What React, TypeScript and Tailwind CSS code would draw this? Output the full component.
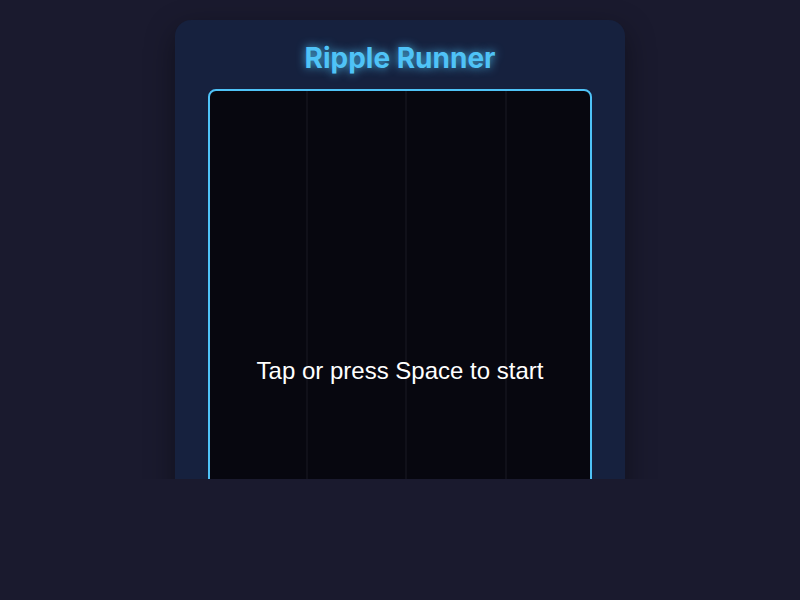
export default function App() {
  return (
    <div className="min-h-[600px] bg-[#1a1a2e]">
      <div className="flex h-[479px] justify-center overflow-hidden pt-5">
        <div className="flex h-[640px] w-[450px] flex-col items-center rounded-2xl bg-[#16213e] pt-[21px] shadow-[0_10px_30px_rgba(0,0,0,0.4)]">
          <h1
            className="text-[28px] font-bold leading-[34px] text-[#4fc3f7] [text-shadow:0_0_10px_rgba(79,195,247,0.9)]"
            style={{ fontFamily: 'Inter, "Noto Sans", sans-serif' }}
          >
            Ripple Runner
          </h1>
          <div className="relative mt-[14px] h-[564px] w-[384px] overflow-hidden rounded-lg border-2 border-[#4fc3f7] bg-[#07070f]">
            <div className="flex h-full">
              <div className="w-[98px] border-r-2 border-[#101019]" />
              <div className="w-[99px] border-r-2 border-[#101019]" />
              <div className="w-[100px] border-r-2 border-[#101019]" />
              <div className="flex-1" />
            </div>
            <div
              className="absolute inset-x-0 top-[266px] text-center text-[24px] leading-[28px] text-white"
              style={{ fontFamily: '"Liberation Sans", Arial, sans-serif' }}
            >
              Tap or press Space to start
            </div>
          </div>
        </div>
      </div>
    </div>
  );
}
